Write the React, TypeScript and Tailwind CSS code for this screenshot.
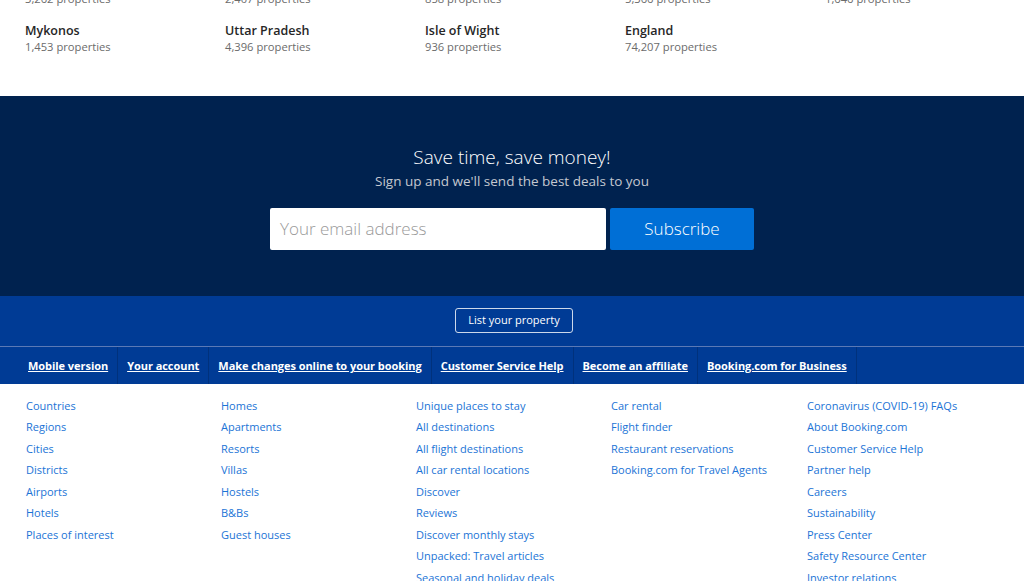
import React from "react";

const font = { fontFamily: '"Open Sans", "Noto Sans", Arial, sans-serif' };

const destinations = [
  [
    { name: "Santorini", count: "3,262 properties" },
    { name: "Maharashtra", count: "2,407 properties" },
    { name: "Cornwall", count: "858 properties" },
    { name: "Scotland", count: "5,366 properties" },
    { name: "Crete", count: "1,646 properties" },
  ],
  [
    { name: "Mykonos", count: "1,453 properties" },
    { name: "Uttar Pradesh", count: "4,396 properties" },
    { name: "Isle of Wight", count: "936 properties" },
    { name: "England", count: "74,207 properties" },
  ],
];

const navLinks = [
  "Mobile version",
  "Your account",
  "Make changes online to your booking",
  "Customer Service Help",
  "Become an affiliate",
  "Booking.com for Business",
];

const footerCols = [
  ["Countries", "Regions", "Cities", "Districts", "Airports", "Hotels", "Places of interest"],
  ["Homes", "Apartments", "Resorts", "Villas", "Hostels", "B&Bs", "Guest houses"],
  [
    "Unique places to stay",
    "All destinations",
    "All flight destinations",
    "All car rental locations",
    "Discover",
    "Reviews",
    "Discover monthly stays",
    "Unpacked: Travel articles",
    "Seasonal and holiday deals",
  ],
  ["Car rental", "Flight finder", "Restaurant reservations", "Booking.com for Travel Agents"],
  [
    "Coronavirus (COVID-19) FAQs",
    "About Booking.com",
    "Customer Service Help",
    "Partner help",
    "Careers",
    "Sustainability",
    "Press Center",
    "Safety Resource Center",
    "Investor relations",
  ],
];

export default function App() {
  return (
    <div className="w-[1024px] h-[581px] overflow-hidden bg-white" style={font}>
      {/* destinations */}
      <div className="h-[96px] overflow-hidden px-[25px]">
        <div className="-mt-[25px] flex flex-col gap-[16px]">
          {destinations.map((row, i) => (
            <div key={i} className="grid grid-cols-[200px_200px_200px_200px_1fr]">
              {row.map((d) => (
                <div key={d.name} className="flex flex-col">
                  <span className="text-[12.5px] leading-[16px] font-semibold text-[#262626]">{d.name}</span>
                  <span className="text-[11.2px] leading-[16px] text-[#6b6b6b]">{d.count}</span>
                </div>
              ))}
            </div>
          ))}
        </div>
      </div>

      {/* newsletter */}
      <div className="h-[200px] bg-[#00224f] flex flex-col items-center pt-[48px]">
        <h2 className="text-[19px] leading-[26px] text-white font-light">Save time, save money!</h2>
        <p className="text-[13.5px] leading-[20px] text-[#c4c8d0] mt-[1px]">
          Sign up and we'll send the best deals to you
        </p>
        <div className="flex gap-[4px] mt-[17px]">
          <div className="w-[336px] h-[42px] bg-white rounded-[2px] flex items-center px-[10px]">
            <span className="text-[17px] font-light text-[#999999]">Your email address</span>
          </div>
          <button className="w-[144px] h-[42px] bg-[#006fd6] rounded-[2px] text-white text-[17px] font-light">
            Subscribe
          </button>
        </div>
      </div>

      {/* blue band */}
      <div className="bg-[#003b95]">
        <div className="h-[51px] flex justify-center items-center border-b border-[#5b79b5]">
          <button className="h-[25px] w-[118px] border border-white/80 rounded-[3px] text-white text-[11px] -mt-[1px] ml-[4px]">
            List your property
          </button>
        </div>
        <div className="h-[37px] flex items-center pl-[19px]">
          {navLinks.map((l) => (
            <div key={l} className="h-full flex items-center px-[9px] border-r border-[#00317c]">
              <a className="text-white text-[11px] font-bold underline leading-none tracking-[-0.05px]">{l}</a>
            </div>
          ))}
        </div>
      </div>

      {/* footer links */}
      <div className="grid grid-cols-[195px_195px_195px_196px_1fr] pl-[26px] pt-[11px]">
        {footerCols.map((col, i) => (
          <ul key={i} className="flex flex-col">
            {col.map((l) => (
              <li key={l} className="text-[11px] leading-[21.45px] text-[#1b74d6]">
                {l}
              </li>
            ))}
          </ul>
        ))}
      </div>
    </div>
  );
}
